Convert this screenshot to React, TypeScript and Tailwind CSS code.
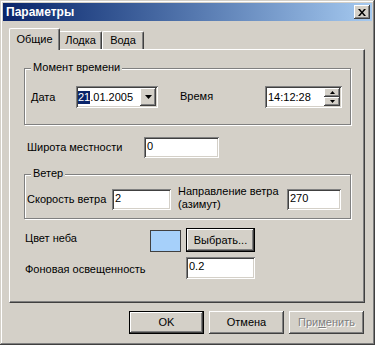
import React from "react";

const raised =
  "shadow-[inset_-1px_-1px_#404040,inset_1px_1px_#ffffff,inset_-2px_-2px_#808080,inset_2px_2px_#d4d0c8]";
const sunken =
  "shadow-[inset_1px_1px_#808080,inset_-1px_-1px_#ffffff,inset_2px_2px_#404040,inset_-2px_-2px_#d4d0c8]";

function Down() {
  return (
    <svg width="7" height="4" viewBox="0 0 7 4">
      <path d="M0 0h7L3.5 4z" fill="#000" />
    </svg>
  );
}

function Input({ w, h = 21, value }: { w: number; h?: number; value: string }) {
  return (
    <div
      className={`bg-white ${sunken} pl-[3px] pt-[3px] leading-[13px] shrink-0`}
      style={{ width: w, height: h }}
    >
      {value}
    </div>
  );
}

function Group({
  title,
  h,
  mt,
  children,
}: {
  title: string;
  h: number;
  mt: number;
  children: React.ReactNode;
}) {
  return (
    <div
      className="relative ml-[14px] w-[327px] border border-[#808080] shadow-[inset_1px_1px_#ffffff,1px_1px_#ffffff] shrink-0"
      style={{ height: h, marginTop: mt }}
    >
      <div className="absolute left-[6px] -top-[8px] px-[2px] bg-[#d4d0c8] leading-[13px]">
        {title}
      </div>
      {children}
    </div>
  );
}

export default function App() {
  return (
    <div className="w-[375px] h-[345px] bg-[#d4d0c8] p-[3px] font-['Liberation_Sans',Arial,sans-serif] text-[11px] text-black shadow-[inset_-1px_-1px_#404040,inset_1px_1px_#d4d0c8,inset_-2px_-2px_#808080,inset_2px_2px_#ffffff] flex flex-col">
      {/* Title bar */}
      <div className="h-[18px] bg-gradient-to-r from-[#0a246a] to-[#a6caf0] flex items-center justify-between pl-[3px] pr-[2px] shrink-0">
        <span className="text-white font-bold text-[12px] leading-[14px]">Параметры</span>
        <div className={`w-[16px] h-[14px] bg-[#d4d0c8] ${raised} flex items-center justify-center`}>
          <svg width="8" height="7" viewBox="0 0 8 7">
            <path d="M0 0h2l2 2.5L6 0h2L5 3.5 8 7H6L4 4.5 2 7H0l3-3.5z" fill="#000" />
          </svg>
        </div>
      </div>

      {/* Tabs */}
      <div className="ml-[6px] mt-[7px] flex items-end h-[21px] shrink-0">
        <div className="relative z-10 -mb-[1px] w-[51px] h-[22px] bg-[#d4d0c8] border-l border-t border-white rounded-tl-[2px] rounded-tr-[2px] border-r border-r-[#404040] shadow-[inset_-1px_0_#808080] flex justify-center pt-[4px] leading-[13px]">
          Общие
        </div>
        <div className="w-[42px] h-[18px] border-t border-white border-r border-r-[#404040] rounded-tr-[2px] shadow-[inset_-1px_0_#808080] flex justify-center pt-[2px] leading-[13px]">
          Лодка
        </div>
        <div className="w-[42px] h-[18px] border-t border-l border-white border-r border-r-[#404040] rounded-tl-[2px] rounded-tr-[2px] shadow-[inset_-1px_0_#808080] flex justify-center pt-[2px] leading-[13px]">
          Вода
        </div>
      </div>

      {/* Panel */}
      <div className="ml-[6px] w-[356px] h-[254px] border border-t-white border-l-white border-r-[#404040] border-b-[#404040] shadow-[inset_-1px_-1px_#808080] flex flex-col shrink-0">
        <Group title="Момент времени" h={57} mt={18}>
          <div className="mt-[17px] h-[22px] flex items-center">
            <span className="ml-[6px] w-[45px] leading-[13px] mt-[1px]">Дата</span>
            <div className={`w-[82px] h-[22px] bg-white ${sunken} flex items-center pl-[2px]`}>
              <span className="bg-[#0a246a] text-white leading-[13px]">21</span>
              <span className="leading-[13px]">.01.2005</span>
              <div className={`ml-auto mr-[2px] w-[16px] h-[18px] bg-[#d4d0c8] ${raised} flex items-center justify-center`}>
                <Down />
              </div>
            </div>
            <span className="ml-[22px] w-[85px] leading-[13px] -mt-[1px]">Время</span>
            <div className={`w-[77px] h-[22px] bg-white ${sunken} flex items-center pl-[3px]`}>
              <span className="leading-[13px]">14:12:28</span>
              <div className="ml-auto mr-[2px] flex flex-col">
                <div className={`w-[16px] h-[9px] bg-[#d4d0c8] ${raised} flex items-center justify-center`}>
                  <svg width="5" height="3" viewBox="0 0 5 3">
                    <path d="M0 3h5L2.5 0z" fill="#000" />
                  </svg>
                </div>
                <div className={`w-[16px] h-[9px] bg-[#d4d0c8] ${raised} flex items-center justify-center`}>
                  <svg width="5" height="3" viewBox="0 0 5 3">
                    <path d="M0 0h5L2.5 3z" fill="#000" />
                  </svg>
                </div>
              </div>
            </div>
          </div>
        </Group>

        <div className="mt-[12px] h-[21px] flex items-center">
          <span className="ml-[17px] w-[117px] leading-[13px]">Широта местности</span>
          <Input w={75} value="0" />
        </div>

        <Group title="Ветер" h={45} mt={16}>
          <div className="mt-[14px] h-[21px] flex items-center">
            <span className="ml-[2px] w-[85px] leading-[13px]">Скорость ветра</span>
            <Input w={59} value="2" />
            <span className="ml-[7px] w-[109px] leading-[13px] -mt-[3px]">
              Направление ветра
              <br />
              (азимут)
            </span>
            <Input w={54} value="270" />
          </div>
        </Group>

        <div className="mt-[9px] h-[24px] flex items-center">
          <span className="ml-[15px] w-[125px] leading-[13px] -mt-[4px]">Цвет неба</span>
          <div className="w-[31px] h-[22px] bg-[#a6d0fa] border border-[#404040] shrink-0 mt-[2px]" />
          <div className="ml-[5px] w-[69px] h-[24px] border border-black shrink-0">
            <div className={`w-full h-full ${raised} flex items-center justify-center leading-[13px]`}>
              Выбрать...
            </div>
          </div>
        </div>

        <div className="mt-[5px] h-[22px] flex items-center">
          <span className="ml-[15px] w-[161px] leading-[13px] mt-[2px]">Фоновая освещенность</span>
          <Input w={69} h={22} value="0.2" />
        </div>
      </div>

      {/* Buttons */}
      <div className="mt-[8px] ml-[126px] flex gap-[5px] shrink-0">
        <div className="w-[75px] h-[23px] border border-black">
          <div className={`w-full h-full ${raised} flex items-center justify-center leading-[13px]`}>
            OK
          </div>
        </div>
        <div className={`w-[75px] h-[23px] ${raised} flex items-center justify-center leading-[13px]`}>
          Отмена
        </div>
        <div className={`w-[75px] h-[23px] ${raised} flex items-center justify-center leading-[13px] text-[#808080] [text-shadow:1px_1px_#ffffff]`}>
          При<span className="underline">м</span>енить
        </div>
      </div>
    </div>
  );
}
